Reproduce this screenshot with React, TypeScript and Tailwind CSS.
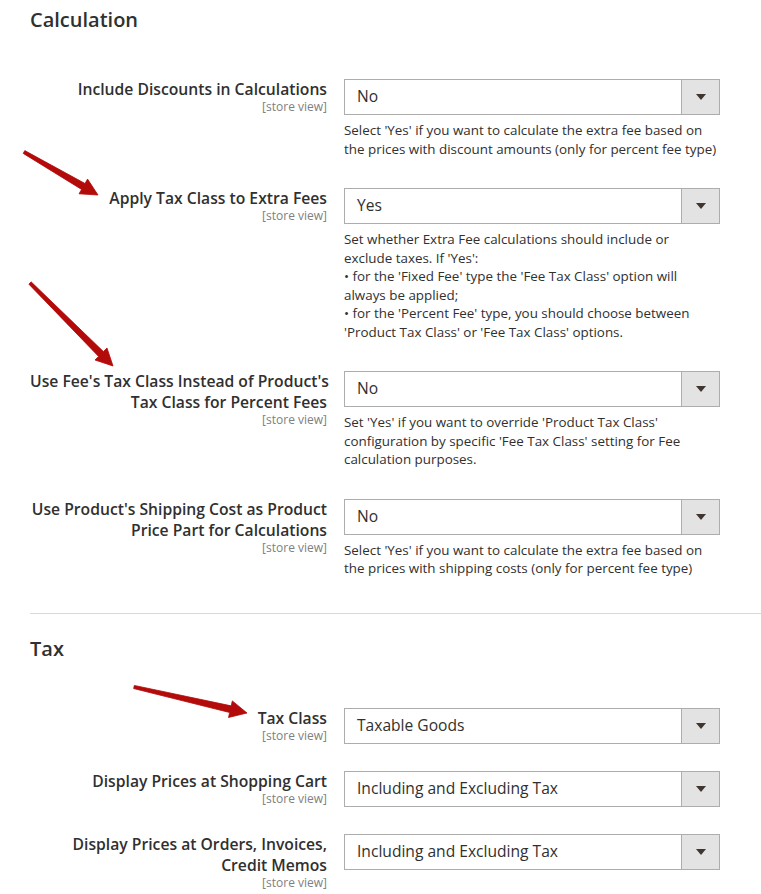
import React from "react";

type Field = {
  label: string[];
  value: string;
  note?: string[];
};

const calculation: Field[] = [
  {
    label: ["Include Discounts in Calculations"],
    value: "No",
    note: [
      "Select 'Yes' if you want to calculate the extra fee based on",
      "the prices with discount amounts (only for percent fee type)",
    ],
  },
  {
    label: ["Apply Tax Class to Extra Fees"],
    value: "Yes",
    note: [
      "Set whether Extra Fee calculations should include or",
      "exclude taxes. If 'Yes':",
      "• for the 'Fixed Fee' type the 'Fee Tax Class' option will",
      "always be applied;",
      "• for the 'Percent Fee' type, you should choose between",
      "'Product Tax Class' or 'Fee Tax Class' options.",
    ],
  },
  {
    label: ["Use Fee's Tax Class Instead of Product's", "Tax Class for Percent Fees"],
    value: "No",
    note: [
      "Set 'Yes' if you want to override 'Product Tax Class'",
      "configuration by specific 'Fee Tax Class' setting for Fee",
      "calculation purposes.",
    ],
  },
  {
    label: ["Use Product's Shipping Cost as Product", "Price Part for Calculations"],
    value: "No",
    note: [
      "Select 'Yes' if you want to calculate the extra fee based on",
      "the prices with shipping costs (only for percent fee type)",
    ],
  },
];

const tax: Field[] = [
  { label: ["Tax Class"], value: "Taxable Goods" },
  { label: ["Display Prices at Shopping Cart"], value: "Including and Excluding Tax" },
  { label: ["Display Prices at Orders, Invoices,", "Credit Memos"], value: "Including and Excluding Tax" },
];

function Select({ value }: { value: string }) {
  return (
    <div className="flex h-[36px] w-[376px] border border-[#adadad] bg-white">
      <div className="flex flex-1 items-center pl-[12px] text-[15.6px] text-[#303030]">{value}</div>
      <div className="flex w-[38px] items-center justify-center border-l border-[#adadad] bg-[#e3e3e3]">
        <svg width="10" height="6" viewBox="0 0 10 6">
          <path d="M0 0h10L5 6z" fill="#41362f" />
        </svg>
      </div>
    </div>
  );
}

function Row({ field }: { field: Field }) {
  return (
    <div className="flex">
      <div className="w-[297px] text-right">
        {field.label.map((l) => (
          <div key={l} className="whitespace-nowrap text-[15.7px] leading-[21px] font-semibold text-[#303030]">
            {l}
          </div>
        ))}
        <div className="text-[12px] leading-[14px] text-[#808080]">[store view]</div>
      </div>
      <div className="ml-[17px] w-[376px]">
        <Select value={field.value} />
        {field.note && (
          <div className="mt-[6px] pb-[3px] text-[13.4px] leading-[18.5px] text-[#303030]">
            {field.note.map((n) => (
              <div key={n} className="whitespace-nowrap">
                {n}
              </div>
            ))}
          </div>
        )}
      </div>
    </div>
  );
}

function Arrow({ x1, y1, x2, y2 }: { x1: number; y1: number; x2: number; y2: number }) {
  const dx = x2 - x1;
  const dy = y2 - y1;
  const len = Math.hypot(dx, dy);
  const ux = dx / len;
  const uy = dy / len;
  const nx = -uy;
  const ny = ux;
  const bx = x2 - ux * 17;
  const by = y2 - uy * 17;
  const pts = [
    [x1 + nx * 1.6, y1 + ny * 1.6],
    [bx + nx * 3.4, by + ny * 3.4],
    [bx + nx * 8.5, by + ny * 8.5],
    [x2, y2],
    [bx - nx * 8.5, by - ny * 8.5],
    [bx - nx * 3.4, by - ny * 3.4],
    [x1 - nx * 1.6, y1 - ny * 1.6],
  ]
    .map((p) => p.join(","))
    .join(" ");
  return <polygon points={pts} fill="#b30a0a" stroke="#b30a0a" strokeWidth="0.8" strokeLinejoin="round" />;
}

export default function App() {
  return (
    <div
      className="relative min-h-screen bg-white pl-[30px] pt-[6px]"
      style={{ fontFamily: "'Open Sans', 'Liberation Sans', sans-serif" }}
    >
      <h2 className="text-[20px] leading-[28px] font-semibold text-[#303030]">Calculation</h2>
      <div className="mt-[45px] flex flex-col gap-[27px]">
        {calculation.map((f) => (
          <Row key={f.label[0]} field={f} />
        ))}
      </div>

      <div className="mt-[32px] h-px bg-[#d9d9d9]" />

      <h2 className="mt-[21px] text-[20px] leading-[28px] font-semibold text-[#303030]">Tax</h2>
      <div className="mt-[45px] flex flex-col gap-[27px] pb-[20px]">
        {tax.map((f) => (
          <Row key={f.label[0]} field={f} />
        ))}
      </div>

      <svg className="pointer-events-none absolute left-0 top-0" width="761" height="894">
        <Arrow x1={24} y1={152} x2={98} y2={195} />
        <Arrow x1={30} y1={283} x2={113} y2={366} />
        <Arrow x1={134} y1={687} x2={247} y2={713} />
      </svg>
    </div>
  );
}
